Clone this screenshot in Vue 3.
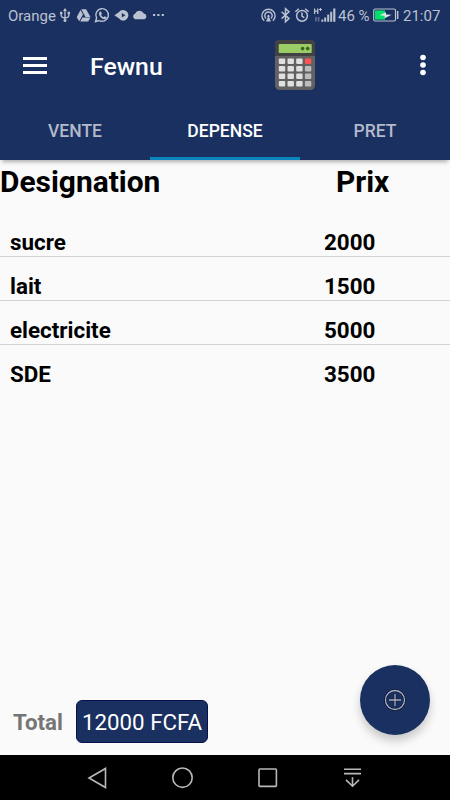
<template>
  <div class="screen">

    <!-- Barre de statut -->
    <div class="status-bar">
      <span class="operator">Orange</span>
      <svg class="ic-left" width="108" height="20" viewBox="58 6 108 20">
        <!-- usb -->
        <g fill="none" stroke="#bac1d0" stroke-width="1.3">
          <path d="M65 10v10M61.2 13v2.6q0 2 3.8 2.6M68.8 12.5v3q0 2-3.8 2.7" />
        </g>
        <path fill="#bac1d0" d="M65 8l2 3h-4zM60 11.8h2.4v2.4H60zM67.6 11.8H70v2.4h-2.4z" />
        <circle cx="65" cy="20.6" r="1.5" fill="#bac1d0" />
        <!-- drive -->
        <path fill="#bac1d0" d="M81.2 9.2h4.9l4.4 7.8h-5zM80.5 10l2.5 4.4-3.8 6.8-2.5-4zM82.5 17.6h8l-2.3 4h-8z" />
        <!-- whatsapp -->
        <path fill="none" stroke="#bac1d0" stroke-width="1.4" d="M95.5 21.7l1.1-3.7a6.3 6.3 0 1 1 2.5 2.5z" />
        <path fill="#bac1d0" d="M99.6 11.8l1.3-.3 1 2.3-.8 1.1q.9 1.7 2.5 2.4l1-1.1 2.2 1.1q-.2 2-2.2 2-2.4-.2-4.2-2.4-2.3-2.9-.8-5.1z" />
        <!-- oeil -->
        <path fill="#bac1d0" d="M114.4 15.3l4.4-3q1.7-2.4 4.2-2.4a5.3 5.3 0 0 1 0 10.8q-2.5 0-4.2-2.4z" />
        <path fill="#1a3060" d="M121.8 13l3.6 2.3-3.6 2.3z" />
        <!-- nuage -->
        <path fill="#bac1d0" d="M135.2 19.2a2.9 2.9 0 0 1-.2-5.5 4.9 4.9 0 0 1 8.8-.3 3 3 0 0 1 .6 5.8z" />
        <path fill="#bac1d0" d="M153 14h2.2v2H153zM157.3 14h2.2v2h-2.2zM161.7 14h2.2v2h-2.2z" />
      </svg>
      <svg class="ic-right" width="78" height="20" viewBox="260 6 78 20">
        <!-- point d'acces -->
        <g fill="none" stroke="#bac1d0" stroke-width="1.4">
          <path d="M264.2 20.8a6.6 6.6 0 1 1 8.6 0" />
          <path d="M266 18.4a3.7 3.7 0 1 1 5 0" />
        </g>
        <path fill="#bac1d0" d="M268.5 14.6l1.3 1.4-.6 1.5 1.8 4h-5l1.8-4-.6-1.5z" />
        <!-- bluetooth -->
        <path fill="none" stroke="#bac1d0" stroke-width="1.5" d="M281.6 11.8l7.4 6.8-3.5 3.2V8.600l3.5 3.2-7.4 6.8" />
        <!-- reveil -->
        <g fill="none" stroke="#bac1d0" stroke-width="1.5">
          <circle cx="302" cy="15.8" r="5.4" />
          <path d="M302 12.6v3.5l2.3 1.5M295.4 11.8l3.4-3M308.6 11.8l-3.4-3" />
        </g>
        <!-- reseau -->
        <path fill="none" stroke="#bac1d0" stroke-width="1.3" d="M314.6 8.5V14M317.8 8.5V14M314.6 11.2h3.2" />
        <path fill="none" stroke="#bac1d0" stroke-width="1" d="M319 9.5h3M320.5 8v3" />
        <path fill="#59698e" d="M315 17h1.8v4.5H315zM317.7 17h1.8v4.5h-1.8z" />
        <path fill="#bac1d0" d="M321.4 19.5h1.9v2.3h-1.9zM324.2 17.5h2v4.3h-2zM327.2 14.5h2v7.3h-2zM330.2 11.7h2v10.1h-2zM333.2 8.5h2.2v13.3h-2.2z" />
      </svg>
      <span class="percent">46 %</span>
      <svg class="battery" width="26" height="14" viewBox="0 0 26 14">
        <rect x=".7" y="1" width="21.8" height="12" rx="1.5" fill="none" stroke="#bac1d0" stroke-width="1.2" />
        <rect x="2" y="2.4" width="10" height="9.2" fill="#00e06a" />
        <path fill="#dfe9ea" d="M6.5 7.3l6.500-3v2.100l5.5.3-6.8 3.5V7.8z" />
        <path fill="#bac1d0" d="M23.9 3h1.500v8h-1.5z" />
      </svg>
      <span class="clock">21:07</span>
    </div>

    <!-- Barre de l'application -->
    <header class="app-bar">
      <div class="toolbar">
        <svg class="menu" width="24" height="18" viewBox="0 0 24 18">
          <path fill="#fff" d="M0 0h24v3H0zM0 7h24v3H0zM0 14h24v3H0z" />
        </svg>
        <h1 class="title">Fewnu</h1>
        <svg class="calc" width="40" height="50" viewBox="0 0 40 50">
          <rect width="40" height="50" rx="4.5" fill="#616161" />
          <path fill="#424242" d="M0 16V4.5A4.5 4.5 0 0 1 4.5 0h31A4.5 4.5 0 0 1 40 4.5V16z" />
          <rect x="3.7" y="4" width="33" height="9" rx=".8" fill="#9ccc65" />
          <circle cx="27.6" cy="8.6" r="1.8" fill="#33691e" />
          <circle cx="32.7" cy="8.6" r="1.8" fill="#33691e" />
          <rect
            v-for="k in keys"
            :key="k.id"
            :x="k.x"
            :y="k.y"
            width="6.4"
            height="5.4"
            rx="1"
            :fill="k.color"
          />
        </svg>
        <svg class="more" width="6" height="22" viewBox="0 0 6 22">
          <g fill="#fff">
            <circle cx="3" cy="3.5" r="2.8" />
            <circle cx="3" cy="11" r="2.8" />
            <circle cx="3" cy="18.5" r="2.8" />
          </g>
        </svg>
      </div>

      <nav class="tabs">
        <button
          v-for="tab in tabs"
          :key="tab"
          class="tab"
          :class="{ active: tab === activeTab }"
          @click="activeTab = tab"
        >
          {{ tab }}
        </button>
      </nav>
    </header>

    <!-- Liste des depenses -->
    <main class="content">
      <div class="list-head">
        <h2>Designation</h2>
        <h2>Prix</h2>
      </div>

      <div class="row" v-for="item in depenses" :key="item.id">
        <span class="name">{{ item.name }}</span>
        <span class="price">{{ item.price }}</span>
      </div>
    </main>

    <footer class="bottom">
      <span class="total-label">Total</span>
      <span class="total-value">{{ total }} FCFA</span>
      <button class="fab">
        <svg width="22" height="22" viewBox="0 0 22 22" fill="none">
          <g stroke="#0c1733" stroke-width="2.6">
            <circle cx="11" cy="11" r="9.5" />
            <path d="M11 5v12M5 11h12" />
          </g>
          <g stroke="#a9b0c0" stroke-width="1.3">
            <circle cx="11" cy="11" r="9.5" />
            <path d="M11 5v12M5 11h12" />
          </g>
        </svg>
      </button>
    </footer>

    <!-- Navigation Android -->
    <div class="nav-bar">
      <svg width="20" height="22" viewBox="0 0 20 22">
        <path d="M18.5 1.5v19L2 11z" />
      </svg>
      <svg width="22" height="22" viewBox="0 0 22 22">
        <circle cx="10.5" cy="10.7" r="9.7" />
      </svg>
      <svg class="recent" width="20" height="20" viewBox="0 0 20 20">
        <rect x="1" y="1" width="17.4" height="17.4" rx=".8" />
      </svg>
      <svg width="18" height="20" viewBox="0 0 18 20">
        <path d="M0 1.3h17M0 5.6h17M8.5 9.2v9M2 11.9l6.5 6.3 6.5-6.3" />
      </svg>
    </div>

  </div>
</template>

<script setup>
import { ref, computed } from "vue";

const tabs = ["VENTE", "DEPENSE", "PRET"];
const activeTab = ref("DEPENSE");

const depenses = ref([
  { id: 1, name: "sucre", price: 2000 },
  { id: 2, name: "lait", price: 1500 },
  { id: 3, name: "electricite", price: 5000 },
  { id: 4, name: "SDE", price: 3500 },
]);

const total = computed(() => depenses.value.reduce((sum, d) => sum + d.price, 0));

/* TOUCHES DE LA CALCULATRICE */
const keys = [];
for (let r = 0; r < 4; r++) {
  for (let c = 0; c < 4; c++) {
    let color = "#e0e0e0";
    if (c === 3) color = r === 0 ? "#ff5252" : "#bdbdbd";
    keys.push({ id: r * 4 + c, x: 3.8 + c * 8.7, y: 18.6 + r * 7.5, color });
  }
}
</script>

<style>
body {
  margin: 0;
}
</style>

<style scoped>
.screen {
  display: flex;
  flex-direction: column;
  width: 450px;
  height: 800px;
  background: #fafafa;
  font-family: Roboto, sans-serif;
  overflow: hidden;
}

/* Barre de statut */
.status-bar {
  display: flex;
  align-items: center;
  height: 32px;
  background: #1a3060;
  color: #bac1d0;
  font-size: 15px;
  white-space: nowrap;
}

.operator {
  width: 50px;
  padding-left: 8px;
}

.ic-right {
  margin-left: 94px;
}

.percent {
  width: 35px;
}

.battery {
  width: 26px;
  flex-shrink: 0;
  margin-top: -2px;
}

.clock {
  padding-left: 4px;
}

/* Barre de l'application */
.app-bar {
  height: 128px;
  background: #1a3060;
  box-shadow: 0 4px 4px -2px rgba(0, 0, 0, 0.3);
}

.toolbar {
  display: flex;
  align-items: center;
  height: 68px;
  padding-left: 23px;
}

.menu {
  margin-top: -1px;
}

.title {
  width: 185px;
  margin: 0 0 0 43px;
  color: #fff;
  font-size: 24.8px;
  font-weight: 500;
}

.calc {
  margin-top: -2px;
}

.more {
  margin: -2px 0 0 104.5px;
}

.tabs {
  display: flex;
  height: 60px;
}

.tab {
  flex: 1;
  box-sizing: border-box;
  padding: 4px 0 0;
  border: none;
  border-bottom: 3px solid transparent;
  background: none;
  color: #b3bacb;
  font-family: inherit;
  font-size: 17.5px;
  font-weight: 500;
  cursor: pointer;
}

.tab.active {
  color: #fff;
  border-bottom-color: #0b86bd;
}

/* Liste */
.content {
  flex: 1;
  color: #000;
}

.list-head {
  display: grid;
  grid-template-columns: 336px 1fr;
  height: 53px;
}

.list-head h2 {
  margin: 4px 0 0;
  font-size: 29.9px;
  line-height: 36px;
  font-weight: 700;
}

.row {
  display: grid;
  grid-template-columns: 314px 1fr;
  box-sizing: border-box;
  height: 44px;
  padding: 15px 0 0 10px;
  border-bottom: 1px solid #d3d3d3;
  font-size: 22.4px;
  line-height: 28px;
  font-weight: 700;
}

.row:last-child {
  border-bottom: none;
}

/* Total et bouton d'ajout */
.bottom {
  display: flex;
  align-items: center;
  height: 90px;
  padding-left: 13px;
}

.total-label {
  width: 63px;
  margin-top: 24px;
  color: #757575;
  font-size: 22.3px;
  font-weight: 700;
}

.total-value {
  box-sizing: border-box;
  width: 132px;
  height: 43px;
  margin-top: 22px;
  border: 1px solid #07104d;
  border-radius: 6px;
  background: #1a3060;
  color: #fff;
  font-size: 22.3px;
  line-height: 43px;
  text-align: center;
  white-space: nowrap;
}

.fab {
  display: flex;
  align-items: center;
  justify-content: center;
  width: 70px;
  height: 70px;
  margin: -20px 0 0 152px;
  padding: 0;
  border: none;
  border-radius: 50%;
  background: #1a3060;
  box-shadow: 0 6px 10px rgba(0, 0, 0, 0.2);
  cursor: pointer;
}

/* Navigation Android */
.nav-bar {
  display: flex;
  align-items: center;
  gap: 65px;
  height: 45px;
  padding-left: 87px;
  background: #000;
}

.nav-bar svg {
  fill: none;
  stroke: #b8b8b8;
  stroke-width: 1.6;
}

.nav-bar .recent {
  margin: 0 1px 0 -1px;
}
</style>
